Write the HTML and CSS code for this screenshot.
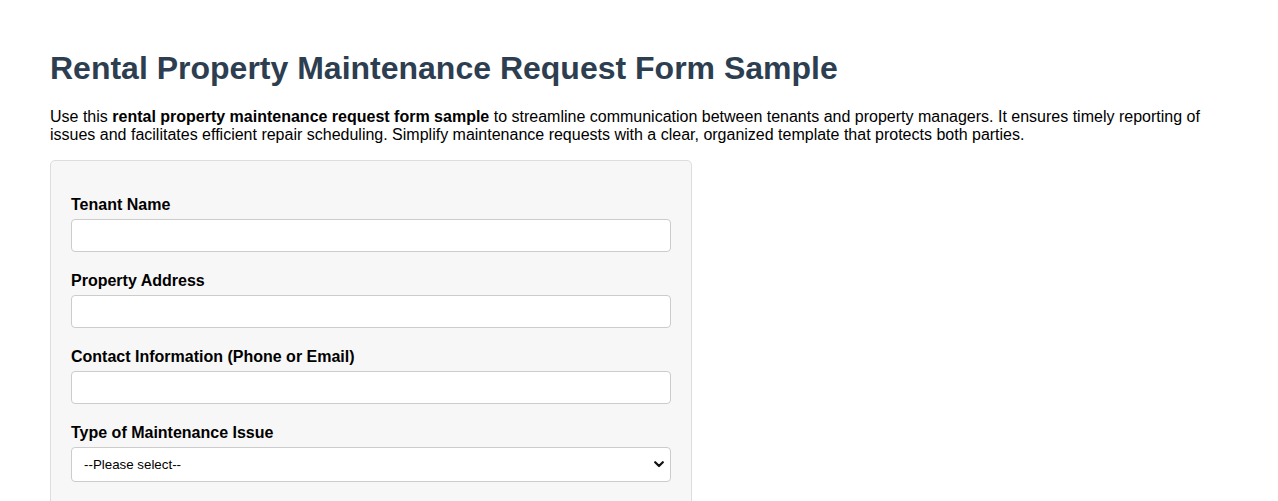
FILE: index.html
```html
<!DOCTYPE html>
<html lang="en">
<head>
<meta charset="utf-8">
<title>Rental Property Maintenance Request Form Sample</title>
<link rel="stylesheet" href="styles.css">
</head>
<body>
<main class="page">
  <h1 class="title">Rental Property Maintenance Request Form Sample</h1>
  <p class="intro">Use this <strong>rental property maintenance request form sample</strong> to streamline communication between tenants and property managers. It ensures timely reporting of issues and facilitates efficient repair scheduling. Simplify maintenance requests with a clear, organized template that protects both parties.</p>
  <form class="form">
    <div class="field">
      <label class="label" for="tenant">Tenant Name</label>
      <input class="input" id="tenant" type="text">
    </div>
    <div class="field">
      <label class="label" for="address">Property Address</label>
      <input class="input" id="address" type="text">
    </div>
    <div class="field">
      <label class="label" for="contact">Contact Information (Phone or Email)</label>
      <input class="input" id="contact" type="text">
    </div>
    <div class="field">
      <label class="label" for="issue">Type of Maintenance Issue</label>
      <div class="select-wrap">
        <select class="select" id="issue">
          <option>--Please select--</option>
          <option>Plumbing</option>
          <option>Electrical</option>
          <option>Heating / Cooling</option>
          <option>Appliance</option>
          <option>Other</option>
        </select>
        <svg class="chevron" width="10" height="7" viewBox="0 0 10 7" aria-hidden="true"><path d="M1.2 1.2 L5 5 L8.8 1.2" fill="none" stroke="#111" stroke-width="2.2" stroke-linecap="round" stroke-linejoin="round"/></svg>
      </div>
    </div>
    <div class="field">
      <label class="label" for="desc">Description of the Issue</label>
      <textarea class="input textarea" id="desc" rows="4"></textarea>
    </div>
  </form>
</main>
</body>
</html>
```
FILE: styles.css
```css
html, body {
  margin: 0;
  padding: 0;
  background: #fff;
}
body {
  font-family: "Liberation Sans", Arial, sans-serif;
  color: #000;
}
.page {
  padding: 28px 50px 40px;
}
.title {
  margin: 22px 0 21px;
  font-size: 32px;
  line-height: 37px;
  font-weight: bold;
  color: #2c3e50;
}
.intro {
  margin: 0 0 16px;
  font-size: 16px;
  line-height: 18px;
}
.form {
  width: 600px;
  padding: 35px 20px 20px;
  background: #f7f7f7;
  border: 1px solid #ddd;
  border-radius: 5px;
}
.field {
  margin-bottom: 20px;
}
.label {
  display: block;
  margin-bottom: 5px;
  font-size: 16px;
  line-height: 18px;
  font-weight: bold;
}
.input {
  display: block;
  box-sizing: border-box;
  width: 100%;
  height: 33px;
  padding: 8px;
  border: 1px solid #ccc;
  border-radius: 4px;
  background: #fff;
  font-family: "Liberation Sans", Arial, sans-serif;
  font-size: 13.33px;
}
.textarea {
  height: 80px;
  resize: vertical;
}
.select-wrap {
  position: relative;
}
.select {
  display: block;
  box-sizing: border-box;
  width: 100%;
  height: 35px;
  padding: 0 12px;
  border: 1px solid #ccc;
  border-radius: 4px;
  background: #fff;
  color: #000;
  font-family: "Liberation Sans", Arial, sans-serif;
  font-size: 13.33px;
  appearance: none;
  -webkit-appearance: none;
}
.chevron {
  position: absolute;
  right: 7px;
  top: 14px;
  pointer-events: none;
}
```
